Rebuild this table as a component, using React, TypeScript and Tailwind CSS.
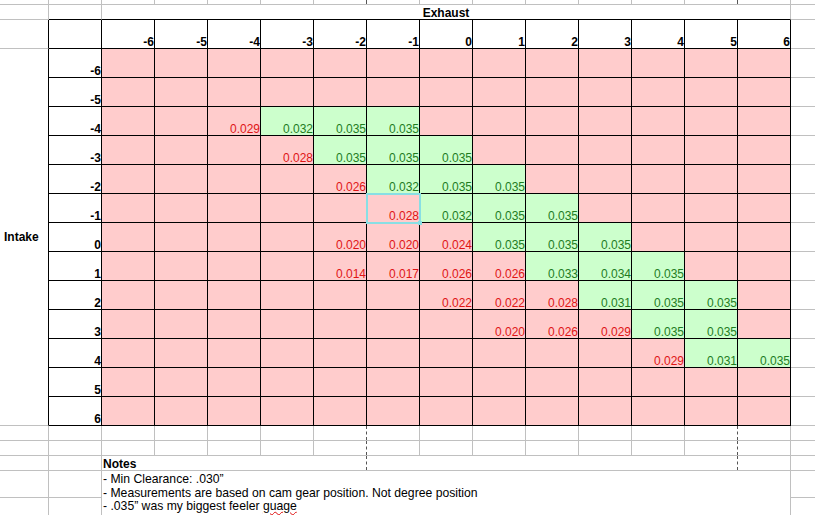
import React from 'react';

type Bd = 'g' | 'k' | 'n';
const RB: Record<Bd, string> = { g: 'border-r border-r-[#c0c0c0]', k: 'border-r border-r-black', n: '' };
const BB: Record<Bd, string> = { g: 'border-b border-b-[#c0c0c0]', k: 'border-b border-b-black', n: '' };

function Cell({
  r = 'g',
  b = 'g',
  className = '',
  dashed = false,
  children,
}: {
  r?: Bd;
  b?: Bd;
  className?: string;
  dashed?: boolean;
  children?: React.ReactNode;
}) {
  return (
    <div className={`${RB[dashed ? 'n' : r]} ${BB[b]} ${className} ${dashed ? 'flex' : ''}`}>
      {children}
      {dashed && <div className="ml-auto h-full border-l border-dashed border-l-[#555]" />}
    </div>
  );
}

const COLS = [-6, -5, -4, -3, -2, -1, 0, 1, 2, 3, 4, 5, 6];
const ROWS = [-6, -5, -4, -3, -2, -1, 0, 1, 2, 3, 4, 5, 6];

type V = [string, 'r' | 'g'];
const DATA: Record<string, V> = {
  '-4,-4': ['0.029', 'r'],
  '-4,-3': ['0.032', 'g'],
  '-4,-2': ['0.035', 'g'],
  '-4,-1': ['0.035', 'g'],
  '-3,-3': ['0.028', 'r'],
  '-3,-2': ['0.035', 'g'],
  '-3,-1': ['0.035', 'g'],
  '-3,0': ['0.035', 'g'],
  '-2,-2': ['0.026', 'r'],
  '-2,-1': ['0.032', 'g'],
  '-2,0': ['0.035', 'g'],
  '-2,1': ['0.035', 'g'],
  '-1,-1': ['0.028', 'r'],
  '-1,0': ['0.032', 'g'],
  '-1,1': ['0.035', 'g'],
  '-1,2': ['0.035', 'g'],
  '0,-2': ['0.020', 'r'],
  '0,-1': ['0.020', 'r'],
  '0,0': ['0.024', 'r'],
  '0,1': ['0.035', 'g'],
  '0,2': ['0.035', 'g'],
  '0,3': ['0.035', 'g'],
  '1,-2': ['0.014', 'r'],
  '1,-1': ['0.017', 'r'],
  '1,0': ['0.026', 'r'],
  '1,1': ['0.026', 'r'],
  '1,2': ['0.033', 'g'],
  '1,3': ['0.034', 'g'],
  '1,4': ['0.035', 'g'],
  '2,0': ['0.022', 'r'],
  '2,1': ['0.022', 'r'],
  '2,2': ['0.028', 'r'],
  '2,3': ['0.031', 'g'],
  '2,4': ['0.035', 'g'],
  '2,5': ['0.035', 'g'],
  '3,1': ['0.020', 'r'],
  '3,2': ['0.026', 'r'],
  '3,3': ['0.029', 'r'],
  '3,4': ['0.035', 'g'],
  '3,5': ['0.035', 'g'],
  '4,4': ['0.029', 'r'],
  '4,5': ['0.031', 'g'],
  '4,6': ['0.035', 'g'],
};

// column index 0..15 (A..P); page breaks after G (6) and N (13)
const isBreak = (i: number) => i === 6 || i === 13;

export default function App() {
  const cells: React.ReactNode[] = [];

  // Row 0 (partial top row)
  for (let i = 0; i < 16; i++) {
    cells.push(<Cell key={`r0-${i}`} r={i === 15 ? 'n' : 'g'} dashed={isBreak(i)} />);
  }

  // Row 1: Exhaust
  cells.push(<Cell key="r1-a" />);
  cells.push(<Cell key="r1-b" b="k" />);
  cells.push(
    <Cell key="r1-ex" b="k" className="col-span-13 flex items-center justify-center pt-px text-[12px] font-bold">
      Exhaust
    </Cell>
  );
  cells.push(<Cell key="r1-p" r="n" />);

  // Row 2: headers
  cells.push(<Cell key="r2-a" r="k" />);
  cells.push(<Cell key="r2-b" r="k" b="k" />);
  COLS.forEach((c) =>
    cells.push(
      <Cell key={`h-${c}`} r="k" b="k" className="flex items-end justify-end text-[12px] leading-[11px] font-bold">
        {c}
      </Cell>
    )
  );
  cells.push(<Cell key="r2-p" r="n" />);

  // Data rows
  ROWS.forEach((row, ri) => {
    if (ri === 0) {
      cells.push(
        <Cell key="intake" r="k" className="row-span-13 flex items-center pl-[4px] text-[12px] font-bold">
          Intake
        </Cell>
      );
    }
    cells.push(
      <Cell key={`l-${row}`} r="k" b="k" className="flex items-end justify-end text-[12px] leading-[11px] font-bold">
        {row}
      </Cell>
    );
    COLS.forEach((col) => {
      const v = DATA[`${row},${col}`];
      const green = v && v[1] === 'g';
      const selected = row === -1 && col === -1;
      cells.push(
        <Cell
          key={`d-${row}-${col}`}
          r="k"
          b="k"
          className={`relative flex items-end justify-end text-[12px] leading-[11px] ${
            green ? 'bg-[#ccffcc] text-[#1f7d1f]' : 'bg-[#ffcccc] text-[#e01515]'
          }`}
        >
          {v ? v[0] : null}
          {selected && (
            <div className="absolute -left-px -top-px right-[-2px] bottom-[-2px] z-10 border-2 border-[#88dfe4]">
              <div className="absolute right-[-3px] bottom-[-3px] h-[4px] w-[4px] bg-[#88dfe4]" />
            </div>
          )}
        </Cell>
      );
    });
    cells.push(<Cell key={`p-${row}`} r="n" />);
  });

  // Rows 16, 17: empty grid rows
  [16, 17].forEach((rn) => {
    for (let i = 0; i < 16; i++) {
      cells.push(<Cell key={`r${rn}-${i}`} r={i === 15 ? 'n' : 'g'} dashed={isBreak(i)} />);
    }
  });

  // Row 18: Notes heading
  cells.push(<Cell key="r18-a" />);
  cells.push(<Cell key="r18-b" />);
  for (let i = 2; i < 16; i++) {
    if (i === 2) {
      cells.push(
        <Cell
          key="r18-c"
          r="n"
          className="flex items-end whitespace-nowrap pl-px text-[12px] leading-[11px] font-bold"
        >
          Notes
        </Cell>
      );
    } else {
      cells.push(<Cell key={`r18-${i}`} r={i === 14 ? 'g' : 'n'} dashed={isBreak(i)} />);
    }
  }

  // Rows 19-20: notes text
  cells.push(<Cell key="r19-a" />);
  cells.push(<Cell key="r19-b" />);
  cells.push(
    <Cell
      key="notes"
      b="n"
      className="col-span-13 row-span-2 pl-px pt-[2px] text-[12.2px] leading-[13.5px] whitespace-nowrap"
    >
      <div>- Min Clearance: .030&rdquo;</div>
      <div>- Measurements are based on cam gear position. Not degree position</div>
      <div>
        - .035&rdquo; was my biggest feeler{' '}
        <span className="underline decoration-wavy decoration-[#e01010] decoration-1 underline-offset-[1px]">guage</span>
      </div>
    </Cell>
  );
  cells.push(<Cell key="r19-p" r="n" />);
  cells.push(<Cell key="r20-a" b="n" />);
  cells.push(<Cell key="r20-b" b="n" />);
  cells.push(<Cell key="r20-p" r="n" b="n" />);

  return (
    <div className="h-[515px] w-[815px] overflow-hidden bg-white font-['Liberation_Sans',Arial,sans-serif] text-black">
      <div className="grid grid-cols-[49px_repeat(14,53px)_24px] grid-rows-[5px_15px_29px_repeat(13,29px)_15px_15px_15px_27px_18px]">
        {cells}
      </div>
    </div>
  );
}
